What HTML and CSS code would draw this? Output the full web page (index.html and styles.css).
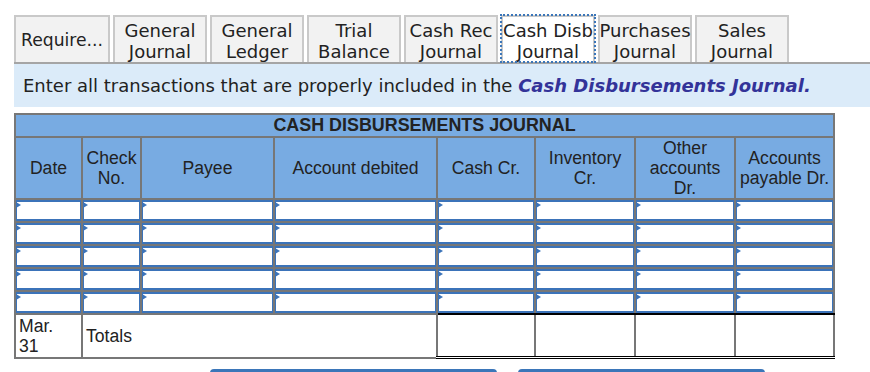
FILE: index.html
```html
<!DOCTYPE html>
<html>
	<head>
		<title>Cash Disbursements Journal</title>
		<link rel="stylesheet" href="styles.css">
	</head>
	<body>
		<div class="tabs">
			<div class="tab tab-first">Require...</div>
			<div class="tab">General<br>Journal</div>
			<div class="tab">General<br>Ledger</div>
			<div class="tab">Trial<br>Balance</div>
			<div class="tab">Cash Rec<br>Journal</div>
			<div class="tab tab-active">Cash Disb<br>Journal</div>
			<div class="tab">Purchases<br>Journal</div>
			<div class="tab">Sales<br>Journal</div>
		</div>
		<div class="prompt">
			<span>Enter all transactions that are properly included in the <em>Cash Disbursements Journal.</em></span>
		</div>

		<table class="journal">
			<colgroup>
				<col style="width:67px">
				<col style="width:59px">
				<col style="width:133px">
				<col style="width:163px">
				<col style="width:98px">
				<col style="width:100px">
				<col style="width:100px">
				<col style="width:99px">
			</colgroup>
			<thead>
				<tr><th colspan="8" class="title">CASH DISBURSEMENTS JOURNAL</th></tr>
				<tr class="head">
					<th>Date</th>
					<th>Check<br>No.</th>
					<th>Payee</th>
					<th>Account debited</th>
					<th>Cash Cr.</th>
					<th>Inventory<br>Cr.</th>
					<th>Other<br>accounts<br>Dr.</th>
					<th>Accounts<br>payable Dr.</th>
				</tr>
			</thead>
			<tbody class="entries">
				<tr>
					<td class="cell"><input class="field" type="text"><span class="flag"></span></td>
					<td class="cell"><input class="field" type="text"><span class="flag"></span></td>
					<td class="cell"><input class="field" type="text"><span class="flag"></span></td>
					<td class="cell"><input class="field" type="text"><span class="flag"></span></td>
					<td class="cell"><input class="field" type="text"><span class="flag"></span></td>
					<td class="cell"><input class="field" type="text"><span class="flag"></span></td>
					<td class="cell"><input class="field" type="text"><span class="flag"></span></td>
					<td class="cell"><input class="field" type="text"><span class="flag"></span></td>
				</tr>
				<tr>
					<td class="cell"><input class="field" type="text"><span class="flag"></span></td>
					<td class="cell"><input class="field" type="text"><span class="flag"></span></td>
					<td class="cell"><input class="field" type="text"><span class="flag"></span></td>
					<td class="cell"><input class="field" type="text"><span class="flag"></span></td>
					<td class="cell"><input class="field" type="text"><span class="flag"></span></td>
					<td class="cell"><input class="field" type="text"><span class="flag"></span></td>
					<td class="cell"><input class="field" type="text"><span class="flag"></span></td>
					<td class="cell"><input class="field" type="text"><span class="flag"></span></td>
				</tr>
				<tr>
					<td class="cell"><input class="field" type="text"><span class="flag"></span></td>
					<td class="cell"><input class="field" type="text"><span class="flag"></span></td>
					<td class="cell"><input class="field" type="text"><span class="flag"></span></td>
					<td class="cell"><input class="field" type="text"><span class="flag"></span></td>
					<td class="cell"><input class="field" type="text"><span class="flag"></span></td>
					<td class="cell"><input class="field" type="text"><span class="flag"></span></td>
					<td class="cell"><input class="field" type="text"><span class="flag"></span></td>
					<td class="cell"><input class="field" type="text"><span class="flag"></span></td>
				</tr>
				<tr>
					<td class="cell"><input class="field" type="text"><span class="flag"></span></td>
					<td class="cell"><input class="field" type="text"><span class="flag"></span></td>
					<td class="cell"><input class="field" type="text"><span class="flag"></span></td>
					<td class="cell"><input class="field" type="text"><span class="flag"></span></td>
					<td class="cell"><input class="field" type="text"><span class="flag"></span></td>
					<td class="cell"><input class="field" type="text"><span class="flag"></span></td>
					<td class="cell"><input class="field" type="text"><span class="flag"></span></td>
					<td class="cell"><input class="field" type="text"><span class="flag"></span></td>
				</tr>
				<tr>
					<td class="cell"><input class="field" type="text"><span class="flag"></span></td>
					<td class="cell"><input class="field" type="text"><span class="flag"></span></td>
					<td class="cell"><input class="field" type="text"><span class="flag"></span></td>
					<td class="cell"><input class="field" type="text"><span class="flag"></span></td>
					<td class="cell"><input class="field" type="text"><span class="flag"></span></td>
					<td class="cell"><input class="field" type="text"><span class="flag"></span></td>
					<td class="cell"><input class="field" type="text"><span class="flag"></span></td>
					<td class="cell"><input class="field" type="text"><span class="flag"></span></td>
				</tr>
			</tbody>
			<tbody>
				<tr class="totals">
					<td class="date">Mar.<br>31</td>
					<td colspan="3" class="label">Totals</td>
					<td class="sum"></td>
					<td class="sum"></td>
					<td class="sum"></td>
					<td class="sum"></td>
				</tr>
			</tbody>
		</table>

		<div class="actions">
			<button class="btn btn-prev" type="button"></button>
			<button class="btn btn-next" type="button"></button>
		</div>
	</body>
</html>
```

FILE: styles.css
```css
body {
	margin: 0;
	padding: 15px 0 0 14px;
	font-family: "DejaVu Sans", Verdana, sans-serif;
	font-size: 18px;
	color: #222222;
	overflow: hidden;
}

	.tabs {
		display: flex;
		gap: 3px;
		border-bottom: 2px solid #a5a5a5;
	}

	.tab {
		box-sizing: border-box;
		width: 94px;
		height: 47px;
		padding-top: 3px;
		border: 2px solid #c9c9c9;
		border-bottom: 0;
		background-color: #f2f2f2;
		display: flex;
		align-items: center;
		justify-content: center;
		text-align: center;
		line-height: 21px;
		white-space: nowrap;
	}

	.tab-first {
		width: 96px;
		padding-top: 2px;
		font-size: 17.2px;
	}

	.tab-active {
		background-color: #ffffff;
		outline: 2px dotted #3b76b9;
		outline-offset: -1px;
	}

	.prompt {
		height: 43px;
		padding-left: 9px;
		background-color: #dbebf9;
		display: flex;
		align-items: center;
	}

	.prompt em {
		color: #333399;
		font-weight: bold;
	}

	.journal {
		margin-top: 6px;
		width: 821px;
		table-layout: fixed;
		border-collapse: collapse;
		font-family: "Liberation Sans", Arial, sans-serif;
		font-size: 17.6px;
		color: #222222;
	}

	.journal th,
	.journal td {
		border: 2px solid #777777;
		padding: 0;
	}

	.title {
		height: 21px;
		line-height: 21px;
		background-color: #78abe2;
		font-size: 17.9px;
		font-weight: bold;
	}

	.head th {
		height: 59px;
		line-height: 20px;
		background-color: #78abe2;
		font-weight: normal;
		text-align: center;
		vertical-align: middle;
	}

	.cell {
		position: relative;
		height: 21px;
	}

	.field {
		display: block;
		box-sizing: border-box;
		width: 100%;
		height: 21px;
		margin: 0;
		padding: 0 5px;
		border: solid #3b73b9;
		border-width: 2px 1px;
		font: inherit;
		outline: none;
	}

	.flag {
		position: absolute;
		top: 2px;
		left: 0;
		border-left: 5px solid #3b73b9;
		border-top: 3px solid transparent;
		border-bottom: 3px solid transparent;
	}

	.entries tr:last-child td:nth-child(n+5) {
		border-bottom-color: #000000;
	}

	.totals td {
		height: 41px;
		line-height: 20px;
		vertical-align: middle;
	}

	.date,
	.label {
		padding-left: 3px !important;
	}

	.sum {
		border-bottom: 3px double #000000 !important;
	}

	.actions {
		display: flex;
		gap: 21px;
		margin-top: 10px;
		padding-left: 196px;
	}

	.btn {
		height: 30px;
		border: 0;
		border-radius: 4px 4px 0 0;
		background-color: #3b76b9;
	}

	.btn-prev {
		width: 287px;
	}

	.btn-next {
		width: 247px;
	}
```
